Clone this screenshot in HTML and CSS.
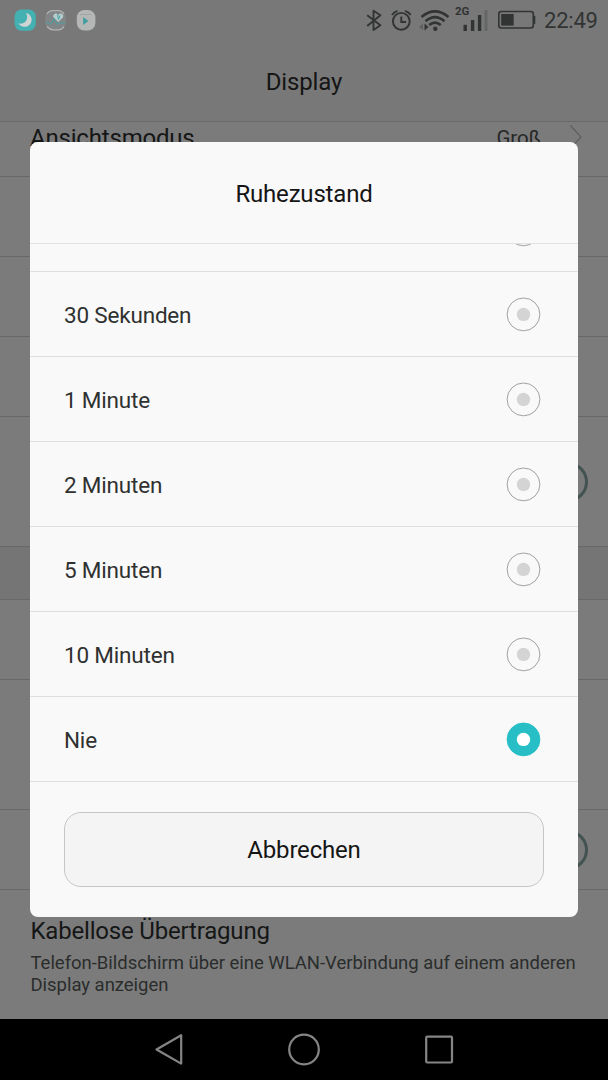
FILE: index.html
```
<!DOCTYPE html>
<html lang="de">
<head>
<meta charset="utf-8">
<title>Display</title>
<link rel="stylesheet" href="styles.css">
</head>
<body>
<div class="phone">
  <header class="top">
    <div class="status">
      <svg class="notifications" width="86" height="24" viewBox="0 0 86 24">
        <rect x=".6" y="1.5" width="21.2" height="21.2" rx="7" fill="#43b0b2"/>
        <path d="M12 5A7 7 0 1 1 4.500 15.300C10.500 17.500 15.500 11 12 5Z" fill="#d0d4d4"/>
        <rect x="31.200" y="2" width="20.600" height="20.500" rx="7.500" fill="#828585"/>
        <path d="M33 6Q35 2.600 39 2.600H44Q48 2.600 50 6M33 18.500Q36 21.800 39 21.800H44Q48 21.800 50 18.500" fill="none" stroke="#b0b2b2" stroke-width="1.300"/>
        <path d="M44.300 14L39.700 9.500C38 6.800 41.800 3.700 44.300 6.800C46.800 3.700 50.600 6.800 48.900 9.500Z" fill="#b4cccc"/>
        <path d="M43.500 6.500l1 5 1.500-4" fill="none" stroke="#43a6a8" stroke-width="1"/>
        <path d="M32 15h3l2 1.500 3-6 3 6 2-1.500h6" fill="none" stroke="#48a0a2" stroke-width="1"/>
        <rect x="62.800" y="2" width="18.600" height="20.500" rx="7.500" fill="#b5b7b7"/>
        <path d="M66 6.500h12" stroke="#a2a5a5"/>
        <path d="M69.200 9v8l5.200-4z" fill="#3f9c9f"/>
      </svg>
      <div class="indicators">
        <svg class="radios" width="136" height="36" viewBox="360 2 136 36" fill="none" stroke="#313433">
          <path d="M367.200 15.300L380.400 25.200L373.500 30V10.800L380.400 15.200L367.200 26" stroke-width="1.900" stroke-linejoin="round"/>
          <circle cx="401.300" cy="21.300" r="8.400" stroke-width="1.900"/>
          <path d="M401.300 16.500V22H406M392 15Q394 11.800 397.500 10.800M405 10.800Q408.800 11.800 410.700 15" stroke-width="1.900"/>
          <path d="M421.500 17Q435 5.800 448.500 17M425.500 21.300Q435 13 444.500 21.300M429.200 25Q435 20.300 440.800 25" stroke-width="2.600"/>
          <circle cx="435.300" cy="28.700" r="2.200" fill="#313433" stroke="none"/>
          <path d="M423 23.500v7l-4-3.500z" fill="#606262" stroke="none"/>
          <path d="M424.500 23.500v7l4-3.500z" fill="#313433" stroke="none"/>
          <path d="M465.200 31v-6.300M472.600 31V20M479.600 31V15" stroke-width="3.400"/>
          <path d="M486 31V10" stroke="#656767" stroke-width="3"/>
          <text class="network" x="455" y="15">2G</text>
        </svg>
        <svg width="38" height="20" viewBox="0 0 38 20">
          <rect x=".8" y="1.500" width="34.500" height="16.500" rx="2.500" fill="none" stroke="#313433" stroke-width="1.600"/>
          <rect x="3.200" y="4" width="12.500" height="11.600" fill="#313433"/>
          <path d="M36.400 5.800v8" stroke="#313433" stroke-width="1.800"/>
        </svg>
        <span class="clock">22:49</span>
      </div>
    </div>
    <h1 class="page-title">Display</h1>
  </header>
  <main class="settings">
    <div class="row first"><span class="label">Ansichtsmodus</span><span class="value">Groß</span><svg class="chevron" viewBox="0 0 12 24"><path d="M.5 .5L11 12L.5 23.500"/></svg></div>
    <div class="row"><svg class="chevron" viewBox="0 0 12 24"><path d="M.5 .5L11 12L.5 23.500"/></svg></div>
    <div class="row"><svg class="chevron" viewBox="0 0 12 24"><path d="M.5 .5L11 12L.5 23.500"/></svg></div>
    <div class="row"><svg class="chevron" viewBox="0 0 12 24"><path d="M.5 .5L11 12L.5 23.500"/></svg></div>
    <div class="row tall"><span class="knob"></span></div>
    <div class="row section"></div>
    <div class="row"><svg class="chevron" viewBox="0 0 12 24"><path d="M.5 .5L11 12L.5 23.500"/></svg></div>
    <div class="row tall"><svg class="chevron" viewBox="0 0 12 24"><path d="M.5 .5L11 12L.5 23.500"/></svg></div>
    <div class="row"><span class="knob"></span></div>
    <div class="cast">
      <div class="label">Kabellose Übertragung</div>
      <p class="summary">Telefon-Bildschirm über eine WLAN-Verbindung auf einem anderen<br>Display anzeigen</p>
    </div>
  </main>
  <nav class="navbar">
    <svg width="608" height="61" viewBox="0 0 608 61" fill="none" stroke="#858585" stroke-width="2.200" stroke-linejoin="round">
      <path d="M156.500 30.500L181.200 16.200V44.600Z"/>
      <circle cx="304" cy="30.500" r="14.800"/>
      <rect x="426.200" y="17.700" width="25.800" height="25.800" rx="1"/>
    </svg>
  </nav>
  <section class="dialog">
    <h2 class="dialog-title">Ruhezustand</h2>
    <div class="options">
      <div class="option"><span></span><svg class="radio" viewBox="0 0 34 34"><circle class="ring" cx="16.500" cy="17.400" r="16.400"/><circle class="dot" cx="16.500" cy="17.400" r="6.700"/></svg></div>
      <div class="option"><span>30 Sekunden</span><svg class="radio" viewBox="0 0 34 34"><circle class="ring" cx="16.500" cy="17.400" r="16.400"/><circle class="dot" cx="16.500" cy="17.400" r="6.700"/></svg></div>
      <div class="option"><span>1 Minute</span><svg class="radio" viewBox="0 0 34 34"><circle class="ring" cx="16.500" cy="17.400" r="16.400"/><circle class="dot" cx="16.500" cy="17.400" r="6.700"/></svg></div>
      <div class="option"><span>2 Minuten</span><svg class="radio" viewBox="0 0 34 34"><circle class="ring" cx="16.500" cy="17.400" r="16.400"/><circle class="dot" cx="16.500" cy="17.400" r="6.700"/></svg></div>
      <div class="option"><span>5 Minuten</span><svg class="radio" viewBox="0 0 34 34"><circle class="ring" cx="16.500" cy="17.400" r="16.400"/><circle class="dot" cx="16.500" cy="17.400" r="6.700"/></svg></div>
      <div class="option"><span>10 Minuten</span><svg class="radio" viewBox="0 0 34 34"><circle class="ring" cx="16.500" cy="17.400" r="16.400"/><circle class="dot" cx="16.500" cy="17.400" r="6.700"/></svg></div>
      <div class="option"><span>Nie</span><svg class="radio selected" viewBox="0 0 34 34"><circle class="ring" cx="16.500" cy="17.400" r="16.400"/><circle class="dot" cx="16.500" cy="17.400" r="6.700"/></svg></div>
    </div>
    <button class="cancel">Abbrechen</button>
  </section>
</div>
</body>
</html>
```
FILE: styles.css
```
* { box-sizing: border-box; }
body { margin: 0; font-family: Roboto, sans-serif; }
h1, h2, p { margin: 0; font-weight: 400; }
.phone { position: relative; width: 608px; height: 1080px; overflow: hidden; display: flex; flex-direction: column; background: #7b7b7b; }
.top { height: 122px; background: #787878; border-bottom: 1px solid #686868; }
.status { height: 40px; padding: 0 9px 0 14px; display: flex; align-items: center; justify-content: space-between; }
.indicators { display: flex; align-items: center; }
.radios { margin-right: 2px; }
.network { font: 700 11.500px Roboto, sans-serif; fill: #313433; stroke: none; }
.clock { width: 55px; margin-left: 8px; font-size: 22px; line-height: 40px; letter-spacing: -.2px; padding-top: 2px; color: #313433; white-space: nowrap; }
.page-title { height: 81px; line-height: 84px; text-align: center; font-size: 24px; letter-spacing: -.15px; color: #151515; }
.settings { flex: 1; min-height: 0; overflow: hidden; }
.row { height: 80px; padding: 0 26px 0 30px; display: flex; align-items: center; border-bottom: 1px solid #696969; }
.row.first { margin-top: -25px; }
.row.first .label { padding-top: 2px; }
.row.tall { height: 130px; }
.row.section { height: 53px; background: #757575; }
.label { flex: 1; font-size: 24px; line-height: 28px; letter-spacing: -.19px; color: #151616; }
.value { font-size: 20.500px; padding-top: 2px; margin-right: 29px; color: #252827; }
.chevron { width: 12px; height: 24px; fill: none; stroke: #606060; stroke-width: 1.300; }
.knob { width: 40px; height: 40px; margin: 0 -6px 0 auto; border: 3px solid #435351; border-radius: 50%; }
.cast { padding: 27px 0 0 30.500px; }
.summary { margin-top: 7px; font-size: 18.500px; line-height: 22px; letter-spacing: -.03px; color: #2a2d2c; white-space: nowrap; }
.navbar { height: 61px; background: #000; }
.dialog { position: absolute; left: 30px; top: 142px; width: 548px; height: 775px; border-radius: 8px; background: #f9f9f9; overflow: hidden; }
.dialog-title { height: 102px; border-bottom: 1px solid #e2e2e2; line-height: 105px; text-align: center; font-size: 24px; letter-spacing: -.19px; color: #151515; }
.options { overflow: hidden; height: 538px; }
.option { height: 85px; padding: 0 37px 0 34px; display: flex; align-items: center; justify-content: space-between; border-bottom: 1px solid #dedede; font-size: 22.500px; letter-spacing: -.19px; color: #2f3130; }
.option span { padding-top: 2px; }
.option:first-child { margin-top: -57px; }
.radio { width: 34px; height: 34px; overflow: visible; }
.ring { fill: none; stroke: #a0a0a0; }
.dot { fill: #d4d4d4; }
.selected .ring { fill: #27bfc5; stroke: #27bfc5; }
.selected .dot { fill: #fff; }
.cancel { display: block; width: 480px; height: 75px; margin: 30px 34px; padding: 1px 0 0; border: 1px solid #c5c5c5; border-radius: 17px; background: #f4f4f4; font: 24px Roboto, sans-serif; letter-spacing: -.19px; color: #151515; }
```
